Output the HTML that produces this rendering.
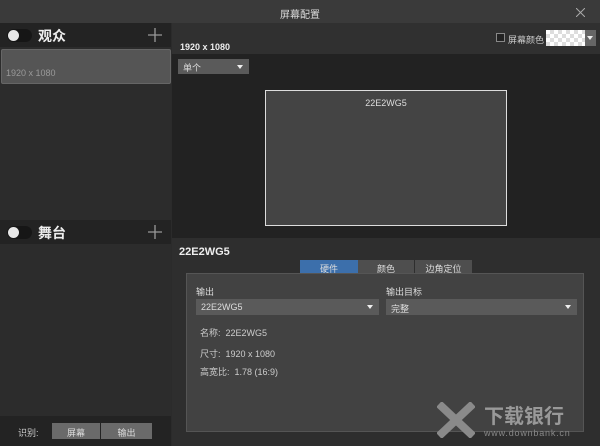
<!DOCTYPE html><html><head><style>
*{margin:0;padding:0;box-sizing:border-box}
body{width:600px;height:446px;background:#2b2b2b;font-family:"Liberation Sans","Noto Sans CJK SC",sans-serif;color:#ddd;position:relative;overflow:hidden;font-size:9px}
div,span{position:absolute}
.dd{background:#5a5a5a;color:#ddd;font-size:9px;padding:2px 5px}
.dd:after{content:"";position:absolute;right:6px;top:6px;border:3.5px solid transparent;border-top:4px solid #eee}
</style></head><body>
<div style="left:0;top:0;width:600px;height:23px;background:#3a3a3a"></div>
<span style="left:0;width:600px;top:6px;text-align:center;font-size:10px;color:#ddd">屏幕配置</span>
<svg style="position:absolute;left:576px;top:8px" width="9" height="9"><path d="M0 0L9 9M9 0L0 9" stroke="#aaa" stroke-width="1"/></svg>
<div style="left:0;top:23px;width:171px;height:423px;background:#2c2c2c"></div>
<div style="left:0;top:23px;width:171px;height:24px;background:#232323"></div>
<div style="left:7px;top:29px;width:25px;height:13px;border-radius:7px;background:#161616"></div>
<div style="left:8px;top:30px;width:11px;height:11px;border-radius:6px;background:#e8e8e8"></div>
<span style="left:38px;top:26px;font-size:14px;font-weight:bold;color:#eee">观众</span>
<svg style="position:absolute;left:148px;top:28px" width="14" height="14"><path d="M7 0V14M0 7H14" stroke="#999" stroke-width="1.3"/></svg>
<div style="left:1px;top:49px;width:170px;height:35px;background:#555;border:1px solid #666;border-radius:2px"></div>
<span style="left:6px;top:68px;color:#999;font-size:9px">1920 x 1080</span>
<div style="left:0;top:220px;width:171px;height:24px;background:#232323"></div>
<div style="left:7px;top:226px;width:25px;height:13px;border-radius:7px;background:#161616"></div>
<div style="left:8px;top:227px;width:11px;height:11px;border-radius:6px;background:#e8e8e8"></div>
<span style="left:38px;top:223px;font-size:14px;font-weight:bold;color:#eee">舞台</span>
<svg style="position:absolute;left:148px;top:225px" width="14" height="14"><path d="M7 0V14M0 7H14" stroke="#999" stroke-width="1.3"/></svg>
<div style="left:0;top:416px;width:171px;height:30px;background:#232323"></div>
<span style="left:18px;top:426px;font-size:9px;color:#ccc">识别:</span>
<div style="left:52px;top:423px;width:48px;height:16px;background:#6a6a6a"></div>
<div style="left:101px;top:423px;width:51px;height:16px;background:#6a6a6a"></div>
<span style="left:52px;top:426px;width:48px;text-align:center;color:#ddd">屏幕</span>
<span style="left:101px;top:426px;width:51px;text-align:center;color:#ddd">输出</span>
<div style="left:172px;top:23px;width:428px;height:31px;background:#303030"></div>
<div style="left:496px;top:33px;width:9px;height:9px;border:1px solid #888;background:#222"></div>
<span style="left:508px;top:33px;font-size:9px;color:#ccc">屏幕颜色</span>
<div style="left:546px;top:30px;width:39px;height:16px;background:repeating-conic-gradient(#ddd 0 25%,#fff 0 50%) 0 0/8px 8px"></div>
<div style="left:585px;top:30px;width:11px;height:16px;background:#666"></div>
<div style="left:587px;top:36px;border:3px solid transparent;border-top:4px solid #eee"></div>
<span style="left:180px;top:42px;font-size:9px;font-weight:bold;color:#eee">1920 x 1080</span>
<div style="left:172px;top:54px;width:428px;height:184px;background:#222"></div>
<div class="dd" style="left:178px;top:59px;width:71px;height:15px">单个</div>
<div style="left:265px;top:90px;width:242px;height:136px;background:#444;border:1.5px solid #ddd"></div>
<span style="left:265px;top:98px;width:242px;text-align:center;font-size:9px;color:#ddd">22E2WG5</span>
<div style="left:172px;top:238px;width:428px;height:208px;background:#2e2e2e"></div>
<span style="left:179px;top:246px;font-size:11px;font-weight:bold;color:#eee">22E2WG5</span>
<div style="left:300px;top:260px;width:58px;height:13px;background:#3c6fab"></div>
<div style="left:358px;top:260px;width:56px;height:13px;background:#4e4e4e"></div>
<div style="left:415px;top:260px;width:57px;height:13px;background:#4e4e4e"></div>
<span style="left:300px;top:262px;width:58px;text-align:center">硬件</span>
<span style="left:358px;top:262px;width:56px;text-align:center">颜色</span>
<span style="left:415px;top:262px;width:57px;text-align:center">边角定位</span>
<div style="left:186px;top:273px;width:398px;height:159px;background:#424242;border:1px solid #555"></div>
<span style="left:196px;top:285px">输出</span>
<span style="left:386px;top:285px">输出目标</span>
<div class="dd" style="left:196px;top:299px;width:183px;height:16px;padding-top:3px">22E2WG5</div>
<div class="dd" style="left:386px;top:299px;width:191px;height:16px;padding-top:3px">完整</div>
<span style="left:200px;top:326px;color:#ccc">名称:&nbsp; 22E2WG5</span>
<span style="left:200px;top:347px;color:#ccc">尺寸:&nbsp; 1920 x 1080</span>
<span style="left:200px;top:365px;color:#ccc">高宽比:&nbsp; 1.78 (16:9)</span>
<svg style="position:absolute;left:437px;top:402px" width="38" height="36"><path d="M2 2L36 34M36 2L2 34" stroke="#8a8a8a" stroke-width="8"/></svg>
<span style="left:484px;top:400px;font-size:20px;font-weight:bold;color:#999">下载银行</span>
<span style="left:484px;top:428px;font-size:9px;color:#888;letter-spacing:0.8px">www.downbank.cn</span>
</body></html>
